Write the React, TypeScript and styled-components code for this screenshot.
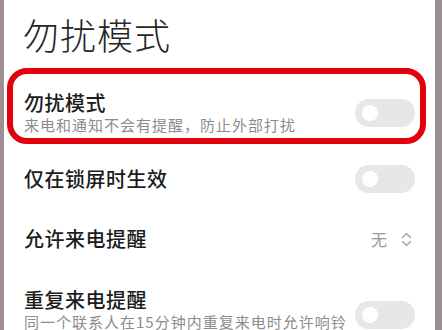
import React from 'react';
import styled, { createGlobalStyle } from 'styled-components';

const GlobalStyle = createGlobalStyle`
  html, body {
    margin: 0;
    padding: 0;
    background: #ffffff;
  }
  body {
    font-family: "Noto Sans CJK SC", "Noto Sans", sans-serif;
    overflow: hidden;
  }
`;

const Frame = styled.div`
  display: flex;
  width: 442px;
  height: 330px;
  overflow: hidden;
`;

const SideBar = styled.div<{ $width: number }>`
  flex: 0 0 ${p => p.$width}px;
  background: #9e8e93;
`;

const Screen = styled.div`
  flex: 1;
  display: flex;
  flex-direction: column;
  background: #ffffff;
`;

const Heading = styled.h1`
  margin: 0;
  padding: 12px 0 0 19px;
  font-size: 36px;
  line-height: 44px;
  font-weight: 300;
  letter-spacing: 1px;
  color: #262626;
`;

const Highlight = styled.div`
  margin: 12px 9px 0 3px;
  border: 6px solid #e2000c;
  border-radius: 20px;
`;

const Row = styled.div<{ $tall?: boolean; $boxed?: boolean }>`
  display: flex;
  align-items: center;
  justify-content: space-between;
  min-height: ${p => (p.$boxed ? 'auto' : p.$tall ? '80px' : '60px')};
  padding: ${p => (p.$boxed ? '17px 5px 4px 11px' : '0 20px 0 20px')};
  box-sizing: border-box;
`;

const Texts = styled.div`
  display: flex;
  flex-direction: column;
`;

const Title = styled.div`
  font-size: 20px;
  line-height: 24px;
  font-weight: 500;
  letter-spacing: 0.5px;
  color: #1c1c1c;
`;

const Sub = styled.div`
  font-size: 15px;
  line-height: 19px;
  letter-spacing: 1px;
  color: #8c8c8c;
`;

const Toggle = styled.div<{ $shift?: number }>`
  flex: 0 0 auto;
  width: 60px;
  height: 28px;
  margin-top: ${p => p.$shift ?? 0}px;
  border-radius: 14px;
  background: #e7e7e7;
  display: flex;
  align-items: center;
  padding-left: 7px;
  box-sizing: border-box;
`;

const Knob = styled.div`
  width: 16px;
  height: 16px;
  border-radius: 50%;
  background: #ffffff;
`;

const Value = styled.div`
  display: flex;
  align-items: center;
  gap: 14px;
  margin-right: 3px;
  font-size: 16px;
  color: #9a9a9a;
`;

const Switch = ({ shift }: { shift?: number }) => (
  <Toggle $shift={shift}>
    <Knob />
  </Toggle>
);

const Chevrons = () => (
  <svg width="11" height="17" viewBox="0 0 11 17" fill="none" stroke="#a8a8a8" strokeWidth="1.5" strokeLinecap="round" strokeLinejoin="round">
    <path d="M1.5 6.5 L5.5 2.5 L9.5 6.5" />
    <path d="M1.5 10.5 L5.5 14.5 L9.5 10.5" />
  </svg>
);

const App: React.FC = () => (
  <>
    <GlobalStyle />
    <Frame>
      <SideBar $width={4} />
      <Screen>
        <Heading>勿扰模式</Heading>
        <Highlight>
          <Row $boxed>
            <Texts>
              <Title>勿扰模式</Title>
              <Sub>来电和通知不会有提醒，防止外部打扰</Sub>
            </Texts>
            <Switch />
          </Row>
        </Highlight>
        <Row style={{ marginTop: 5 }}>
          <Title>仅在锁屏时生效</Title>
          <Switch />
        </Row>
        <Row>
          <Title>允许来电提醒</Title>
          <Value>
            无
            <Chevrons />
          </Value>
        </Row>
        <Row $tall>
          <Texts>
            <Title>重复来电提醒</Title>
            <Sub>同一个联系人在15分钟内重复来电时允许响铃</Sub>
          </Texts>
          <Switch shift={12} />
        </Row>
      </Screen>
      <SideBar $width={7} />
    </Frame>
  </>
);

export default App;
